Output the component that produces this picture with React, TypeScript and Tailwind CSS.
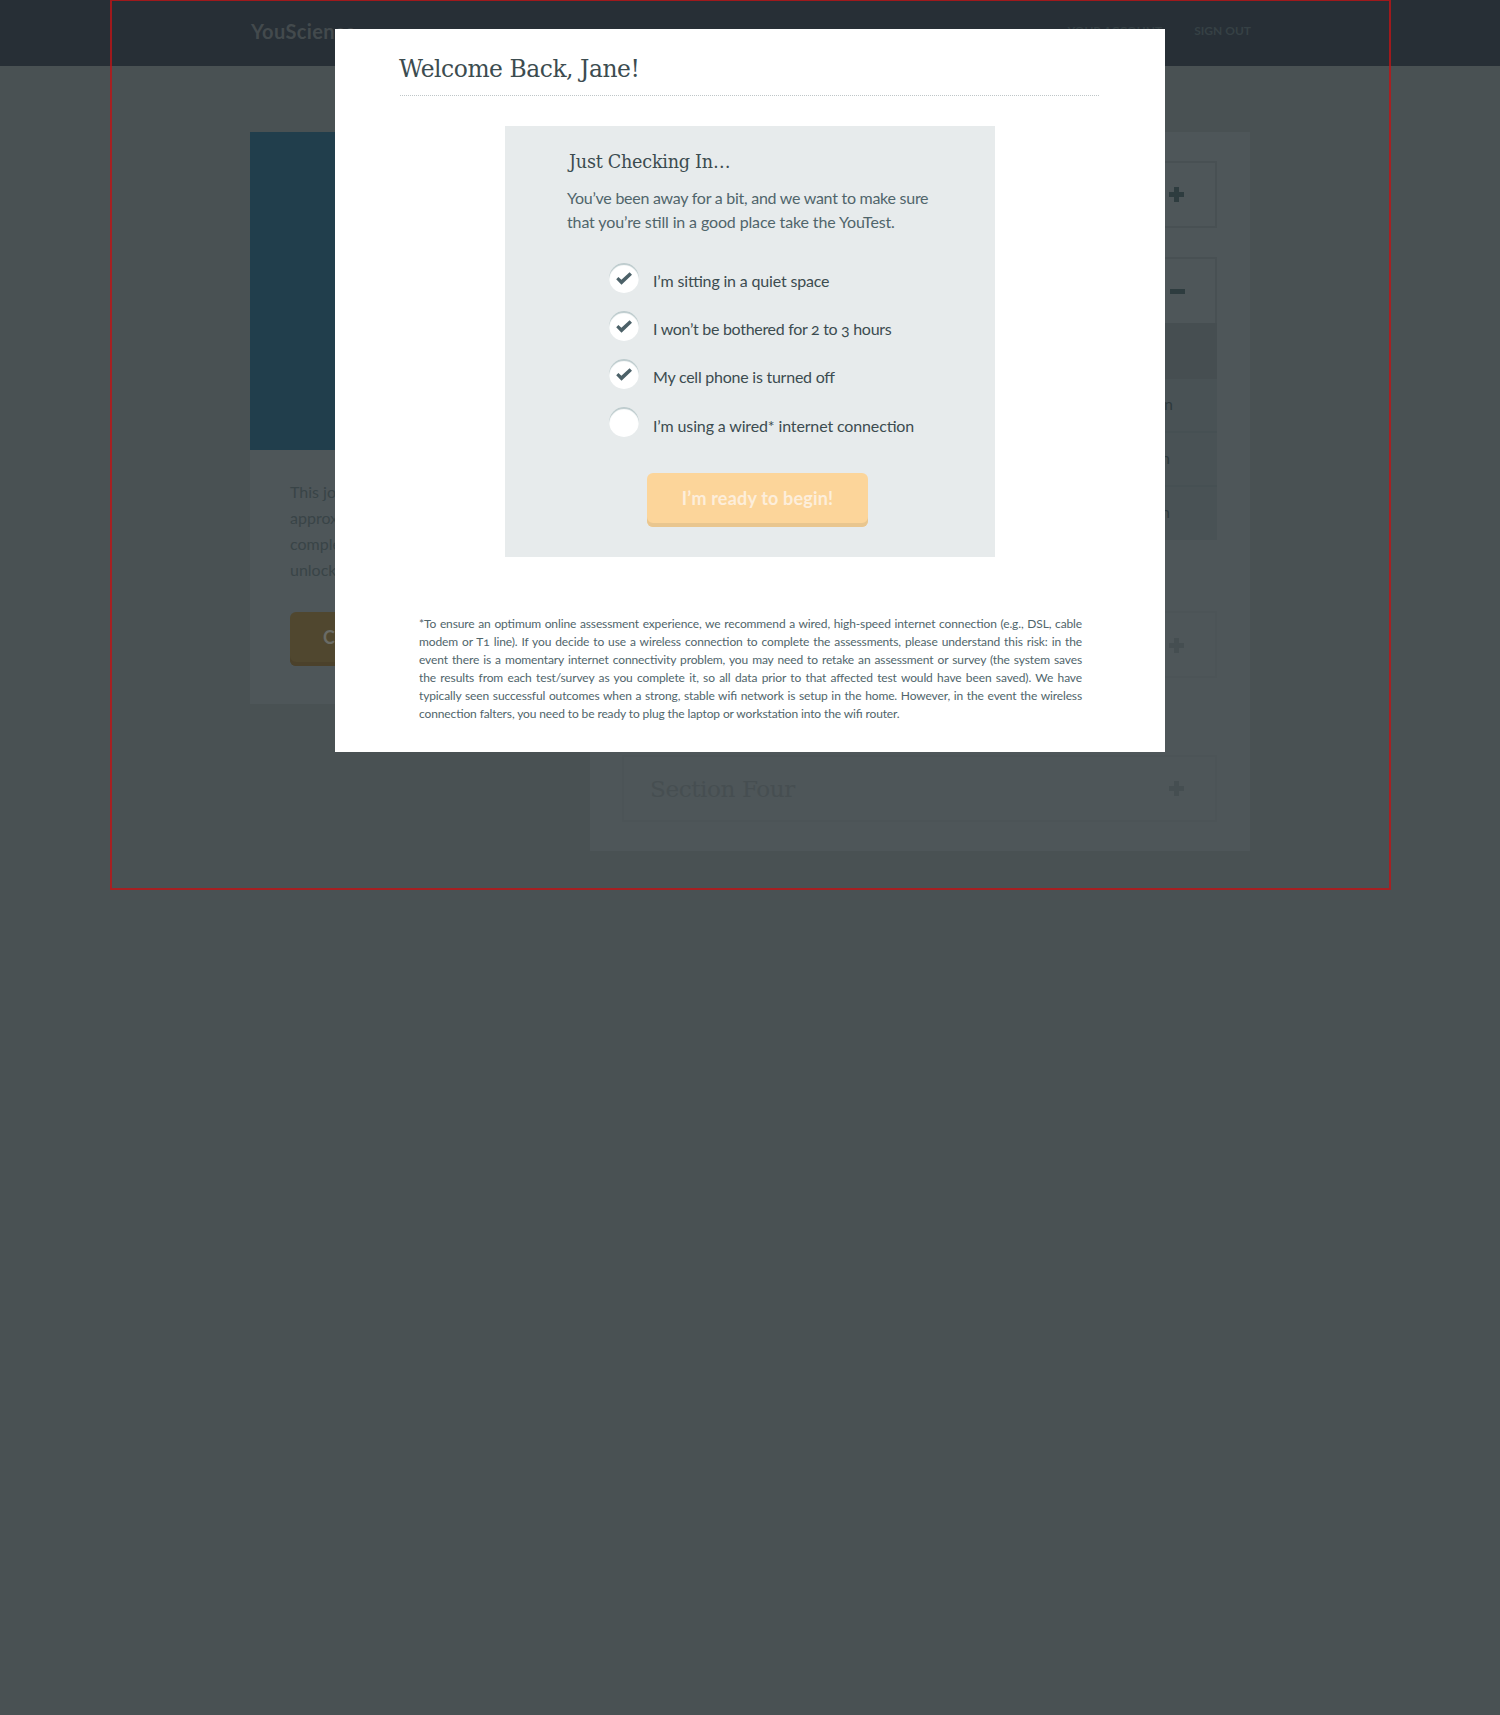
import type { ReactNode } from 'react';

const lato = "font-['Lato','Noto_Sans',sans-serif] [font-feature-settings:'onum','liga']";
const slab = "font-['DejaVu_Serif',serif]";

function Plus({ className }: { className: string }) {
  return (
    <svg width="15" height="15" viewBox="0 0 15 15" className={className} fill="currentColor">
      <path d="M5 0h5v5h5v5h-5v5H5v-5H0V5h5z" />
    </svg>
  );
}

function Section({ title, box, text, children }: { title: string; box: string; text: string; children: ReactNode }) {
  return (
    <div className={`flex items-center justify-between pl-[26px] ${box}`}>
      <span className={`${slab} text-[23.2px] leading-8 tracking-[-0.45px] ${text}`}>{title}</span>
      {children}
    </div>
  );
}

function CheckItem({ checked, label, text }: { checked: boolean; label: string; text: string }) {
  return (
    <li className="flex h-[30px] gap-[14px]">
      <span className="h-[30px] w-[30px] shrink-0 rounded-full bg-white shadow-[inset_0_2px_1px_#bccacc]">
        {checked && (
          <svg width="30" height="30" viewBox="0 0 30 30" fill="#4c6168">
            <path d="M7.2 16.2 9.4 14 12.4 16.8 20.6 9.3 23 11.7 12.5 21.8z" />
          </svg>
        )}
      </span>
      <span className={`text-base leading-6 whitespace-nowrap text-[#3c4c50] ${text}`}>{label}</span>
    </li>
  );
}

const footnote = [
  '*To ensure an optimum online assessment experience, we recommend a wired, high-speed internet connection (e.g., DSL, cable',
  'modem or T1 line). If you decide to use a wireless connection to complete the assessments, please understand this risk: in the',
  'event there is a momentary internet connectivity problem, you may need to retake an assessment or survey (the system saves',
  'the results from each test/survey as you complete it, so all data prior to that affected test would have been saved). We have',
  'typically seen successful outcomes when a strong, stable wifi network is setup in the home. However, in the event the wireless',
];

function Modal() {
  return (
    <div className="absolute top-[29px] left-[335px] h-[723px] w-[830px] bg-white pt-6 pl-[65px]">
      <div className="h-[43px] w-[699px] border-b border-dotted border-[#bfc6c8]">
        <h1 className={`${slab} -ml-px text-[23.4px] leading-8 tracking-[-0.45px] whitespace-nowrap text-[#3c4c50]`}>
          Welcome Back, Jane!
        </h1>
      </div>
      <div className="mt-[30px] ml-[105px] h-[431px] w-[490px] bg-[#e7ebec] pt-6 pl-[62px]">
        <h2 className={`${slab} ml-[2px] text-[17.6px] leading-6 tracking-[-0.25px] text-[#3c4c50]`}>Just Checking In…</h2>
        <p className="mt-3 text-base leading-6 whitespace-nowrap text-[#50656b]">
          <span className="block tracking-[-0.26px]">You’ve been away for a bit, and we want to make sure</span>
          <span className="block tracking-[-0.13px]">that you’re still in a good place take the YouTest.</span>
        </p>
        <ul className="mt-[29px] ml-[42px] flex flex-col gap-[18px]">
          <CheckItem checked label="I’m sitting in a quiet space" text="mt-[6px] tracking-[-0.17px]" />
          <CheckItem checked label="I won’t be bothered for 2 to 3 hours" text="mt-[6px] tracking-[-0.3px]" />
          <CheckItem checked label="My cell phone is turned off" text="mt-[6px] tracking-[-0.24px]" />
          <CheckItem checked={false} label="I’m using a wired* internet connection" text="mt-[7px] tracking-[-0.14px]" />
        </ul>
        <button className="mt-9 ml-[80px] flex h-[54px] w-[221px] items-center justify-center rounded-md bg-[#fcd59a] pb-[3px] text-[18px] font-bold tracking-[0.18px] text-[#fdeedb] shadow-[inset_0_-4px_0_#e9c68f]">
          I’m ready to begin!
        </button>
      </div>
      <div className="mt-[58px] ml-[19px] w-[663px] text-[12px] leading-[18px] tracking-[-0.12px] whitespace-nowrap text-[#50656b]">
        {footnote.map((line) => (
          <p key={line} className="h-[18px] [text-align-last:justify]">{line}</p>
        ))}
        <p>connection falters, you need to be ready to plug the laptop or workstation into the wifi router.</p>
      </div>
    </div>
  );
}

export default function App() {
  return (
    <div className={`relative h-[1715px] w-[1500px] overflow-hidden bg-[#495153] ${lato}`}>
      <header className="flex h-[66px] items-center justify-between bg-[#272f36] pr-[249px] pb-1 pl-[251px] font-bold">
        <span className="text-[20px] leading-6 tracking-[0.35px] text-[#434a4d]">YouScience</span>
        <nav className="flex gap-8 pb-px text-[12px] leading-4 text-[#364145]">
          <span>YOUR ACCOUNT</span>
          <span>SIGN OUT</span>
        </nav>
      </header>

      <main className="flex items-start gap-10 px-[250px] pt-[66px]">
        <aside className="h-[572px] w-[300px] shrink-0 bg-[#4e5659]">
          <div className="h-[318px] bg-[#213e4c]" />
          <div className="px-10 pt-[29px]">
            <p className="text-base leading-[26px] text-[#394447]">
              This journey<br />approximately<br />complete and<br />unlock more
            </p>
            <div className="mt-[29px] flex h-[54px] w-[220px] rounded-md bg-[#50472f] pl-[33px] text-[18px] leading-[51px] font-bold text-[#6a6b65] shadow-[inset_0_-4px_0_#4b412b]">
              Continue
            </div>
          </div>
        </aside>

        <section className="h-[719px] w-[660px] shrink-0 bg-[#4e5659] px-8 pt-[29px]">
          <div className="w-[595px]">
            <Section title="Section One" box="h-[67px] border-2 border-[#485053] pr-[31px]" text="text-[#2e3b3e]">
              <Plus className="text-[#2e3c3f]" />
            </Section>
            <Section title="Section Two" box="mt-[29px] h-[66px] border-2 border-b-0 border-[#485053] pr-[30px]" text="text-[#2e3b3e]">
              <span className="h-[5px] w-[15px] bg-[#2e3c3f]" />
            </Section>
            <div className="h-14 bg-[#464e51]" />
            <div className="bg-[#495255] text-base text-[#2e3a3d]">
              <div className="flex h-[52px] items-center justify-end pr-11 pb-[2px]">30 min</div>
              <div className="flex h-[54px] items-center justify-end border-t-2 border-[#465053] pr-[47px] pb-[2px]">10 min</div>
              <div className="flex h-[55px] items-center justify-end border-t-2 border-[#465053] pr-[47px] pb-[3px]">10 min</div>
            </div>
            <Section title="Section Three" box="mt-[71px] h-[67px] border-2 border-[#4c5457] pt-[2px] pr-[31px]" text="text-[#464e51]">
              <Plus className="text-[#454e51]" />
            </Section>
            <Section title="Section Four" box="mt-[77px] h-[67px] border-2 border-[#4c5457] pr-[31px]" text="text-[#464e51]">
              <Plus className="text-[#454e51]" />
            </Section>
          </div>
        </section>
      </main>

      <div className="pointer-events-none absolute top-0 left-[110px] h-[890px] w-[1281px] border-2 border-t border-[rgba(190,20,22,0.8)]" />
      <Modal />
    </div>
  );
}
